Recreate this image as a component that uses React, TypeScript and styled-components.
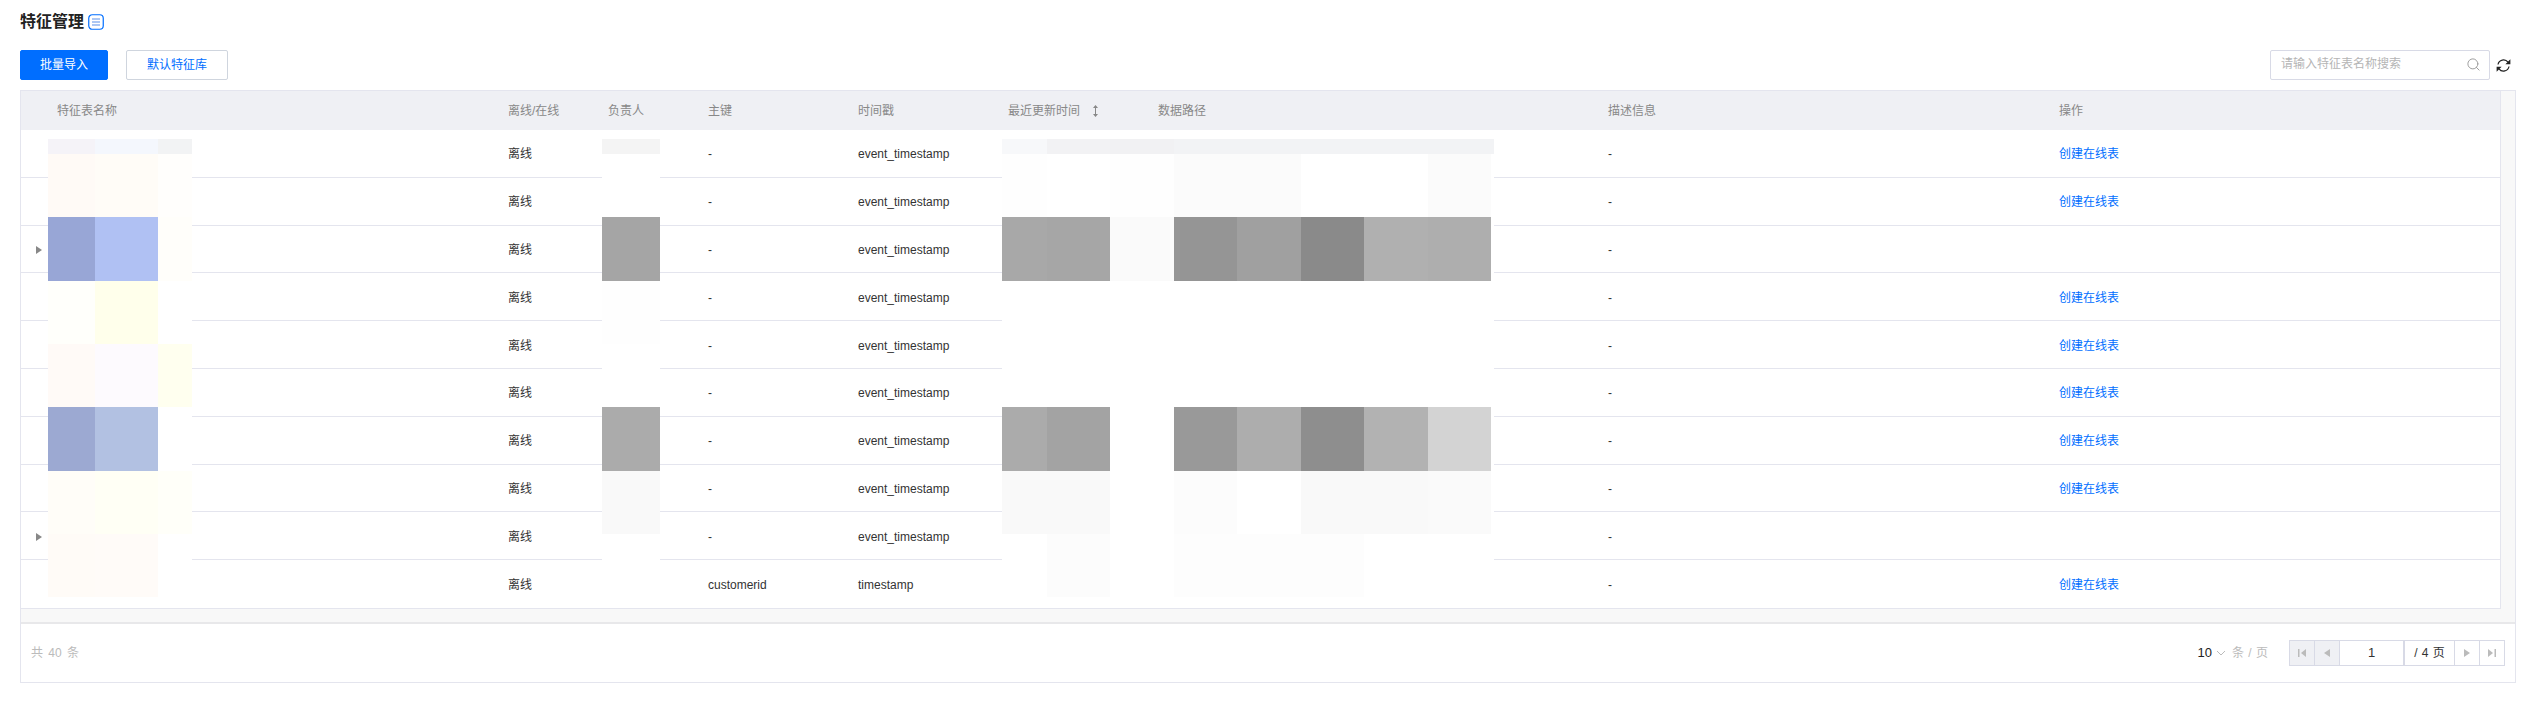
import React from 'react';
import styled, { createGlobalStyle } from 'styled-components';
import { Search } from 'lucide-react';

const Global = createGlobalStyle`
  html, body { margin: 0; padding: 0; background: #fff; }
  body { font-family: "Liberation Sans", "Noto Sans CJK SC", sans-serif; font-size: 12px; line-height: 20px; color: #000; }
`;

const Page = styled.div`
  width: 2539px; height: 710px; box-sizing: border-box; padding: 12px 23px 0 20px; overflow: hidden;
`;
const TitleRow = styled.div`display: flex; align-items: center; height: 20px; gap: 4px;`;
const Title = styled.h2`margin: 0; font-size: 16px; font-weight: 600; line-height: 20px; color: #222;`;
const Toolbar = styled.div`display: flex; align-items: center; height: 30px; margin-top: 18px;`;
const Button = styled.button<{ $primary?: boolean }>`
  box-sizing: border-box; height: 30px; padding: 0; font: inherit; border-radius: 2px; margin-right: 18px;
  width: ${p => (p.$primary ? '88px' : '102px')};
  background: ${p => (p.$primary ? '#006eff' : '#fff')};
  color: ${p => (p.$primary ? '#fff' : '#006eff')};
  border: 1px solid ${p => (p.$primary ? '#006eff' : '#cfd5de')};
`;
const Spacer = styled.div`flex: 1;`;
const SearchBox = styled.div`
  box-sizing: border-box; width: 220px; height: 30px; border: 1px solid #d8dae6; border-radius: 2px;
  display: flex; align-items: center; justify-content: space-between; padding: 0 8px 2px 10px; color: #b5b5b5;
`;
const RefreshBtn = styled.div`display: flex; margin-left: 6px; margin-right: 5px;`;

const Frame = styled.div`margin-top: 10px; border: 1px solid #e4e5ee; box-sizing: border-box; width: 2496px; height: 593px;`;
const TableArea = styled.div`
  box-sizing: border-box; height: 533px; padding: 0 14px 14px 0; background: #f8f8f8; border-bottom: 2px solid #e8e8ea;
`;
const Main = styled.div`background: #fff; border-right: 1px solid #e4e5ee; border-bottom: 1px solid #e4e5ee; position: relative;`;
const cols = '36px 451px 100px 100px 150px 150px 150px 450px 451px 1fr';
const HeadRow = styled.div`
  display: grid; grid-template-columns: ${cols}; height: 39px; align-items: center; background: #eff0f4; color: #888;
`;
const HeadSort = styled.div`display: flex; align-items: center; gap: 12px;`;
const Body = styled.div`position: relative; height: 478px;`;
const Row = styled.div<{ $last?: boolean }>`
  box-sizing: border-box; display: grid; grid-template-columns: ${cols}; height: 47.8px; padding-top: 2px; align-items: center; color: #333;
  border-bottom: ${p => (p.$last ? 'none' : '1px solid #e4e5ee')};
`;
const Arrow = styled.span`
  margin-left: 15px; width: 0; height: 0; border-left: 6px solid #888; border-top: 4px solid transparent; border-bottom: 4px solid transparent;
`;
const Link = styled.a`color: #006eff;`;
const Mosaic = styled.div<{ $left: number; $cols: string }>`
  position: absolute; top: 9px; left: ${p => p.$left}px; display: grid;
  grid-template-columns: ${p => p.$cols}; grid-template-rows: 15px 63px 64px 63px 63px 64px 63px 63px;
`;
const Cell = styled.div<{ $c: string }>`background: #${p => p.$c};`;

const Footer = styled.div`
  display: flex; align-items: center; height: 58px; padding: 0 10px; color: #bbb; word-spacing: 2px;
`;
const PerPage = styled.div`display: flex; align-items: center; color: #bbb; margin-right: 21px;`;
const PerValue = styled.span`color: #222; font-size: 13px; margin-right: 4px;`;
const PerUnit = styled.span`margin-left: 6px; word-spacing: 1px;`;
const Pager = styled.div`display: flex; height: 26px; border: 1px solid #d8dae6; box-sizing: border-box; color: #333;`;
const PageBtn = styled.div<{ $disabled?: boolean }>`
  box-sizing: border-box; width: 25px; display: flex; align-items: center; justify-content: center;
  border-right: 1px solid #d8dae6; background: ${p => (p.$disabled ? '#eff0f4' : '#fff')};
  &:last-child { border-right: none; width: 24px; }
`;
const PageInput = styled.div`
  box-sizing: border-box; width: 65px; display: flex; align-items: center; justify-content: center; border-right: 2px solid #d8dae6; font-size: 13px;
`;
const PageTotal = styled.div`
  box-sizing: border-box; width: 50px; display: flex; align-items: center; justify-content: center; border-right: 1px solid #d8dae6; word-spacing: 1px;
`;

const A = [
  ['f5f3f8','f4f7fd','f2f3f4'],['fffaf6','fffcf7','fffefc'],['98a6d6','b0c1f3','fffefa'],['fffffb','ffffeb','ffffff'],
  ['fffaf7','fdfafe','ffffef'],['9ca9d2','b2c1e2','ffffff'],['fffdf8','fffff5','fffff9'],['fffbf7','fffbf8','ffffff'],
];
const B = [['f4f4f4'],['ffffff'],['a5a5a5'],['fefefe'],['ffffff'],['ababab'],['f9f9f9'],['ffffff']];
const C = [
  ['f7f8fa','f2f2f4','f1f1f3','f2f3f5','f2f3f5','f2f3f5','f2f3f5','f2f3f5','f2f3f5'],
  ['fefefe','ffffff','fefefe','fbfbfb','fbfbfb','ffffff','ffffff','fbfbfb','ffffff'],
  ['a8a8a8','a6a6a6','fafafa','959595','a0a0a0','8a8a8a','b0b0b0','aeaeae','ffffff'],
  ['ffffff','ffffff','ffffff','ffffff','ffffff','ffffff','ffffff','ffffff','ffffff'],
  ['ffffff','ffffff','ffffff','ffffff','ffffff','ffffff','ffffff','ffffff','ffffff'],
  ['ababab','a3a3a3','ffffff','999999','adadad','8e8e8e','b2b2b2','d3d3d3','ffffff'],
  ['f9f9f9','f9f9f9','ffffff','fcfcfc','ffffff','f9f9f9','f9f9f9','fafafa','ffffff'],
  ['ffffff','fcfcfc','ffffff','fdfdfd','fdfdfd','fdfdfd','ffffff','ffffff','ffffff'],
];

const rows = Array.from({ length: 10 }, (_, i) => ({
  expandable: i === 2 || i === 8,
  pk: i === 9 ? 'customerid' : '-',
  ts: i === 9 ? 'timestamp' : 'event_timestamp',
}));

const Blur = ({ left, cols: c, data }: { left: number; cols: string; data: string[][] }) => (
  <Mosaic $left={left} $cols={c}>
    {data.flatMap((r, i) => r.map((col, j) => <Cell key={`${i}-${j}`} $c={col} />))}
  </Mosaic>
);

const DocIcon = () => (
  <svg width="16" height="16" viewBox="0 0 16 16" fill="none" stroke="#006eff">
    <rect x="0.75" y="0.75" width="14.5" height="14.5" rx="3.5" strokeWidth="1.2" />
    <path d="M4 5h8M4 8h8M4 11h8" stroke="#5b8fe8" strokeWidth="1" />
  </svg>
);
const SortIcon = () => (
  <svg width="7" height="12" viewBox="0 0 7 12" fill="#888">
    <path d="M3.5 0 6 3H4v6h2l-2.5 3L1 9h2V3H1z" />
  </svg>
);
const Chevron = () => (
  <svg width="10" height="6" viewBox="0 0 10 6" fill="none" stroke="#bbb"><path d="M1 1l4 4 4-4" /></svg>
);
const RefreshIcon = () => (
  <svg width="15" height="15" viewBox="0 0 15 15" fill="#222" stroke="none">
    <path d="M2 6.5A5.6 5.6 0 0 1 12 4.2" fill="none" stroke="#222" strokeWidth="1.2" />
    <path d="M13 8.5A5.6 5.6 0 0 1 3 10.8" fill="none" stroke="#222" strokeWidth="1.2" />
    <path d="M14.4 1.2v5h-5z" />
    <path d="M0.6 13.8v-5h5z" />
  </svg>
);
const Tri = ({ dir, bar }: { dir: 'l' | 'r'; bar?: boolean }) => (
  <svg width="8" height="8" viewBox="0 0 8 8" fill="#bbb">
    {dir === 'l' ? <path d={bar ? 'M3 4l5-4v8z' : 'M1 4l6-4v8z'} /> : <path d={bar ? 'M5 4L0 0v8z' : 'M7 4L1 0v8z'} />}
    {bar && (dir === 'l' ? <rect x="0" y="0" width="1.5" height="8" /> : <rect x="6.5" y="0" width="1.5" height="8" />)}
  </svg>
);

export default function App() {
  return (
    <Page>
      <Global />
      <TitleRow>
        <Title>特征管理</Title>
        <DocIcon />
      </TitleRow>
      <Toolbar>
        <Button $primary>批量导入</Button>
        <Button>默认特征库</Button>
        <Spacer />
        <SearchBox>
          请输入特征表名称搜索
          <Search size={15} strokeWidth={1.5} color="#999" />
        </SearchBox>
        <RefreshBtn><RefreshIcon /></RefreshBtn>
      </Toolbar>
      <Frame>
        <TableArea>
          <Main>
            <HeadRow>
              <span />
              <span>特征表名称</span>
              <span>离线/在线</span>
              <span>负责人</span>
              <span>主键</span>
              <span>时间戳</span>
              <HeadSort>最近更新时间<SortIcon /></HeadSort>
              <span>数据路径</span>
              <span>描述信息</span>
              <span>操作</span>
            </HeadRow>
            <Body>
              {rows.map((r, i) => (
                <Row key={i} $last={i === 9}>
                  {r.expandable ? <Arrow /> : <span />}
                  <span />
                  <span>离线</span>
                  <span />
                  <span>{r.pk}</span>
                  <span>{r.ts}</span>
                  <span />
                  <span />
                  <span>-</span>
                  {r.expandable ? <span /> : <Link>创建在线表</Link>}
                </Row>
              ))}
              <Blur left={27} cols="47px 63px 34px" data={A} />
              <Blur left={581} cols="58px" data={B} />
              <Blur left={981} cols="45px 63px 64px 63px 64px 63px 64px 63px 3px" data={C} />
            </Body>
          </Main>
        </TableArea>
        <Footer>
          共 40 条
          <Spacer />
          <PerPage>
            <PerValue>10</PerValue>
            <Chevron />
            <PerUnit>条 / 页</PerUnit>
          </PerPage>
          <Pager>
            <PageBtn $disabled><Tri dir="l" bar /></PageBtn>
            <PageBtn $disabled><Tri dir="l" /></PageBtn>
            <PageInput>1</PageInput>
            <PageTotal>/ 4 页</PageTotal>
            <PageBtn><Tri dir="r" /></PageBtn>
            <PageBtn><Tri dir="r" bar /></PageBtn>
          </Pager>
        </Footer>
      </Frame>
    </Page>
  );
}
